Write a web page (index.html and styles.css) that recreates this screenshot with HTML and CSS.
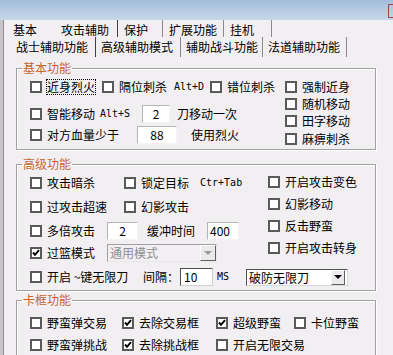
FILE: index.html
```html
<!DOCTYPE html>
<html lang="zh">
<head>
<meta charset="utf-8"/>
<title>攻击辅助</title>
<meta content="width=device-width, initial-scale=1" name="viewport"/>
<link rel="stylesheet" href="styles.css">
</head>
<body>
<!-- Заголовок окна -->
<div class="titlebar"><span class="corner"></span></div>

<div class="window">
<div class="edge"></div>
<div class="main">

<!-- Вкладки -->
<div class="tabs tabs-main">
<div class="tab">基本</div>
<div class="tab active">攻击辅助</div>
<div class="tab">保护</div>
<div class="tab">扩展功能</div>
<div class="tab">挂机</div>
</div>
<div class="tabs tabs-sub">
<div class="tab active">战士辅助功能</div>
<div class="tab">高级辅助模式</div>
<div class="tab">辅助战斗功能</div>
<div class="tab">法道辅助功能</div>
</div>

<div class="panel">

<!-- 基本功能 -->
<fieldset class="group group-basic">
<legend>基本功能</legend>
<div class="basic">
<div class="basic-left">
<div class="row row-a">
<label class="chk c72"><span class="box"></span><span class="focus">近身烈火</span></label>
<label class="chk c108"><span class="box"></span>隔位刺杀<span class="key ml7">Alt+D</span></label>
<label class="chk"><span class="box"></span>错位刺杀</label>
</div>
<div class="row row-b">
<label class="chk c112"><span class="box"></span>智能移动<span class="key ml5">Alt+S</span></label>
<span class="field num w28">2</span>
<span class="ml7">刀移动一次</span>
</div>
<div class="row row-c">
<label class="chk c107"><span class="box"></span>对方血量少于</label>
<span class="field num w40">88</span>
<span class="ml14">使用烈火</span>
</div>
</div>
<div class="basic-right">
<label class="chk"><span class="box"></span>强制近身</label>
<label class="chk"><span class="box"></span>随机移动</label>
<label class="chk"><span class="box"></span>田字移动</label>
<label class="chk"><span class="box"></span>麻痹刺杀</label>
</div>
</div>
</fieldset>

<!-- 高级功能 -->
<fieldset class="group group-adv">
<legend>高级功能</legend>
<div class="adv">
<div class="adv-top">
<div class="adv-left">
<div class="row">
<label class="chk c94"><span class="box"></span>攻击暗杀</label>
<label class="chk"><span class="box"></span>锁定目标<span class="key ml11">Ctr+Tab</span></label>
</div>
<div class="row">
<label class="chk c94"><span class="box"></span>过攻击超速</label>
<label class="chk"><span class="box"></span>幻影攻击</label>
</div>
<div class="row">
<label class="chk c77"><span class="box"></span>多倍攻击</label>
<span class="field num w31">2</span>
<span class="ml9">缓冲时间</span>
<span class="field w32 ml12">400</span>
</div>
<div class="row">
<label class="chk c77"><span class="box checked"><svg viewBox="0 0 8 8" width="8" height="8"><path d="M1 3.5 L3 5.8 L7 1.2" fill="none" stroke="#000" stroke-width="2"/></svg></span>过篮模式</label>
<div class="combo disabled w110"><span class="combo-text">通用模式</span><span class="combo-btn"><i class="arrow"></i></span></div>
</div>
</div>
<div class="adv-right">
<label class="chk"><span class="box"></span>开启攻击变色</label>
<label class="chk"><span class="box"></span>幻影移动</label>
<label class="chk"><span class="box"></span>反击野蛮</label>
<label class="chk"><span class="box"></span>开启攻击转身</label>
</div>
</div>
<div class="row row-e">
<label class="chk c113"><span class="box"></span>开启 ~键无限刀</label>
<span class="w37">间隔：</span>
<span class="field dark w33">10</span>
<span class="key ml4">MS</span>
<div class="combo ml17 w102"><span class="combo-text">破防无限刀</span><span class="combo-btn"><i class="arrow"></i></span></div>
</div>
</div>
</fieldset>

<!-- 卡框功能 -->
<fieldset class="group group-frame">
<legend>卡框功能</legend>
<div class="frame">
<label class="chk"><span class="box"></span>野蛮弹交易</label>
<label class="chk"><span class="box checked"><svg viewBox="0 0 8 8" width="8" height="8"><path d="M1 3.5 L3 5.8 L7 1.2" fill="none" stroke="#000" stroke-width="2"/></svg></span>去除交易框</label>
<label class="chk"><span class="box checked"><svg viewBox="0 0 8 8" width="8" height="8"><path d="M1 3.5 L3 5.8 L7 1.2" fill="none" stroke="#000" stroke-width="2"/></svg></span>超级野蛮</label>
<label class="chk"><span class="box"></span>卡位野蛮</label>
<label class="chk"><span class="box"></span>野蛮弹挑战</label>
<label class="chk"><span class="box checked"><svg viewBox="0 0 8 8" width="8" height="8"><path d="M1 3.5 L3 5.8 L7 1.2" fill="none" stroke="#000" stroke-width="2"/></svg></span>去除挑战框</label>
<label class="chk"><span class="box"></span>开启无限交易</label>
</div>
</fieldset>

</div>
</div>
</div>
</body>
</html>
```
FILE: styles.css
```css
body {
    margin: 0;
    width: 393px;
    height: 355px;
    overflow: hidden;
    background: #f2eff2;
    color: #000;
    font-family: "Noto Sans CJK SC", sans-serif;
    font-size: 12px;
    line-height: 14px;
}

.titlebar {
    height: 20px;
    background: linear-gradient(#a3bddb, #c8d7ea);
    display: flex;
    justify-content: flex-end;
}

.titlebar .corner {
    width: 4px;
    height: 12px;
    margin-top: 4px;
    border: 1px solid #a04848;
    border-right: none;
}

.window {
    display: flex;
}

.edge {
    width: 3px;
    background: #c6c4c6;
    border-right: 1px solid #8c8c8c;
}

.main {
    flex: 1;
}

/* Вкладки */
.tabs {
    display: grid;
}

.tabs-main {
    height: 17px;
    grid-template-columns: 51px 63px 45px 61px 48px;
}

.tabs-sub {
    height: 20px;
    grid-template-columns: 92px 85px 82px 84px;
}

.tab {
    box-sizing: border-box;
    padding: 3px 0 0 5px;
    border-right: 1px solid #8a8a8a;
    white-space: nowrap;
}

.tabs-main .tab {
    padding-left: 6px;
}

.tabs-main .tab:first-child {
    padding-left: 9px;
    border-right: none;
}

.tabs-sub .tab:first-child {
    padding-left: 12px;
}

.tab.active {
    border-right: 1px solid #404040;
}

/* Группы */
.panel {
    padding: 4px 0 0 12px;
}

.group {
    box-sizing: border-box;
    width: 360px;
    min-width: 0;
    margin: 0;
    padding: 0 0 0 13px;
    border: 1px solid #a2a2a2;
    box-shadow: 1px 1px 0 #fff, inset 1px 1px 0 #fff;
}

.group legend {
    margin-left: -8px;
    padding: 0 1px;
    color: #c4662e;
    line-height: 14px;
}

.group-adv {
    margin-top: 7px;
}

.group-frame {
    margin-top: 2px;
}

.row {
    display: flex;
    align-items: center;
    white-space: nowrap;
}

.chk {
    display: flex;
    align-items: center;
    white-space: nowrap;
}

.box {
    flex: none;
    box-sizing: border-box;
    width: 12px;
    height: 12px;
    margin-right: 5px;
    border: 2px solid #5a5a5a;
    background: #fff;
    display: flex;
    align-items: center;
    justify-content: center;
}

.focus {
    outline: 1px dotted #000;
}

.key {
    font-family: "DejaVu Sans Mono", monospace;
    font-size: 10px;
}

.field {
    box-sizing: border-box;
    height: 18px;
    padding-left: 2px;
    background: #fff;
    border: 1px solid;
    border-color: #b4b4b4 #f4f4f4 #f4f4f4 #b4b4b4;
    line-height: 16px;
}

.field.num {
    text-align: center;
    padding-left: 0;
}

.field.dark {
    border-color: #505050 #d0d0d0 #d0d0d0 #505050;
    padding-left: 3px;
}

.combo {
    box-sizing: border-box;
    display: flex;
    height: 17px;
    background: #fff;
    border: 1px solid;
    border-color: #505050 #d8d8d8 #d8d8d8 #505050;
}

.combo-text {
    flex: 1;
    padding-left: 2px;
    line-height: 15px;
}

.combo-btn {
    box-sizing: border-box;
    width: 14px;
    margin: 0 2px 0 0;
    background: #ece9ec;
    border: 1px solid;
    border-color: #fff #606060 #606060 #fff;
    display: flex;
    align-items: center;
    justify-content: center;
}

.arrow {
    width: 0;
    height: 0;
    border-left: 4px solid transparent;
    border-right: 4px solid transparent;
    border-top: 4px solid #000;
}

.combo.disabled {
    height: 18px;
    background: #f2eff2;
    border-color: #a0a0a0 #e8e8e8 #e8e8e8 #a0a0a0;
    color: #8e8e8e;
}

.combo.disabled .combo-btn {
    width: 16px;
    margin: 0;
}

.combo.disabled .arrow {
    border-top-color: #9a9a9a;
}

/* Основные */
.basic {
    display: flex;
    padding: 3px 0 1px;
}

.basic-left {
    width: 255px;
}

.row-a {
    height: 18px;
}

.row-b {
    height: 18px;
    margin-top: 9px;
}

.row-c {
    height: 18px;
    margin-top: 3px;
}

.basic-right {
    display: grid;
    grid-template-rows: 18px 16px 17px 19px;
    align-items: center;
}

/* Расширенные */
.adv {
    padding-bottom: 3px;
}

.adv-top {
    display: flex;
}

.adv-left {
    width: 238px;
    display: grid;
    grid-template-rows: 24px 24px 23px 22px;
}

.adv-right {
    display: grid;
    grid-template-rows: 22px 22px 22px 22px;
    align-items: center;
}

.row-e {
    height: 20px;
    margin-top: 3px;
}

/* Окна */
.frame {
    display: grid;
    grid-template-columns: 92px 94px 78px auto;
    grid-auto-rows: 22px;
    align-items: center;
    padding-top: 5px;
}

.c72 { width: 72px; }
.c77 { width: 77px; }
.c94 { width: 94px; }
.c107 { width: 107px; }
.c108 { width: 108px; }
.c112 { width: 112px; }
.c113 { width: 113px; }

.w28 { width: 28px; }
.w31 { width: 31px; }
.w32 { width: 32px; }
.w33 { width: 33px; }
.w37 { width: 37px; }
.w40 { width: 40px; }
.w102 { width: 102px; }
.w110 { width: 110px; }

.ml4 { margin-left: 4px; }
.ml5 { margin-left: 5px; }
.ml7 { margin-left: 7px; }
.ml9 { margin-left: 9px; }
.ml11 { margin-left: 11px; }
.ml12 { margin-left: 12px; }
.ml14 { margin-left: 14px; }
.ml17 { margin-left: 17px; }
```
